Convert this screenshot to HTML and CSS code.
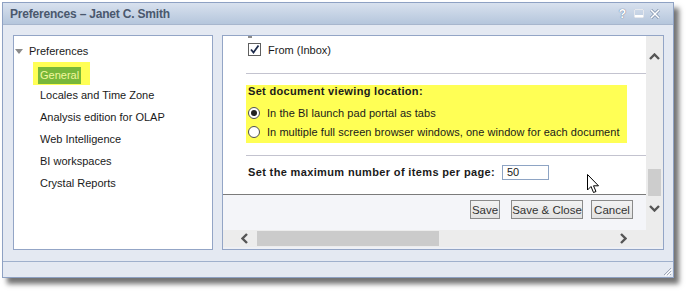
FILE: index.html
```html
<!DOCTYPE html>
<html>
<head>
<meta charset="utf-8">
<link rel="stylesheet" href="styles.css">
</head>
<body>
<div class="window">
  <div class="titlebar">
    <span class="title">Preferences – Janet C. Smith</span>
    <div class="tb-icons">
      <span class="q">?</span>
      <svg width="10" height="9" viewBox="0 0 10 9"><rect x="0.5" y="0.5" width="9" height="8" fill="none" stroke="#fff" stroke-width="1"/><rect x="0.5" y="6" width="9" height="2.5" fill="#fff"/><rect x="0" y="0" width="10" height="9" fill="none" stroke="#7d8ea8" stroke-width="0.4"/></svg>
      <svg width="10" height="10" viewBox="0 0 10 10"><path d="M1 1 L9 9 M9 1 L1 9" stroke="#7d8ea8" stroke-width="3"/><path d="M1 1 L9 9 M9 1 L1 9" stroke="#fff" stroke-width="1.6"/></svg>
    </div>
  </div>
  <div class="body">
    <div class="tree">
      <div class="node root"><span class="tri"></span>Preferences</div>
      <div class="node child selrow"><span class="sel-outer"><span class="sel-inner">General</span></span></div>
      <div class="node child">Locales and Time Zone</div>
      <div class="node child">Analysis edition for OLAP</div>
      <div class="node child">Web Intelligence</div>
      <div class="node child">BI workspaces</div>
      <div class="node child">Crystal Reports</div>
    </div>
    <div class="panel">
      <div class="panel-main">
        <div class="scroll-content">
          <div class="doc">
            <div class="frag"></div>
            <div class="check-row">
              <span class="checkbox"><svg width="11" height="11" viewBox="0 0 11 11"><path d="M2 5.5 L4.5 8.5 L9.5 1.5" fill="none" stroke="#1c2a4a" stroke-width="1.8"/></svg></span>
              <span>From (Inbox)</span>
            </div>
            <div class="sep"></div>
            <div class="yellow">
              <div class="heading">Set document viewing location:</div>
              <div class="radio-row"><span class="radio on"><span class="dot"></span></span><span>In the BI launch pad portal as tabs</span></div>
              <div class="radio-row"><span class="radio"></span><span>In multiple full screen browser windows, one window for each document</span></div>
            </div>
            <div class="sep sep2"></div>
            <div class="items-row">
              <span class="bold">Set the maximum number of items per page:</span>
              <span class="input">50</span>
            </div>
          </div>
          <div class="toolbar">
            <button class="btn b-save">Save</button>
            <button class="btn b-close">Save &amp; Close</button>
            <button class="btn b-cancel">Cancel</button>
          </div>
        </div>
        <div class="vscroll">
          <svg class="chev up" width="11" height="7" viewBox="0 0 11 7"><path d="M1 6 L5.5 1.5 L10 6" fill="none" stroke="#555" stroke-width="2.4"/></svg>
          <div class="vthumb"></div>
          <svg class="chev down" width="11" height="7" viewBox="0 0 11 7"><path d="M1 1 L5.5 5.5 L10 1" fill="none" stroke="#555" stroke-width="2.4"/></svg>
        </div>
      </div>
      <div class="hscroll">
        <svg class="hchev left" width="7" height="11" viewBox="0 0 7 11"><path d="M6 1 L1.5 5.5 L6 10" fill="none" stroke="#555" stroke-width="2.4"/></svg>
        <div class="hthumb"></div>
        <svg class="hchev right" width="7" height="11" viewBox="0 0 7 11"><path d="M1 1 L5.5 5.5 L1 10" fill="none" stroke="#555" stroke-width="2.4"/></svg>
      </div>
    </div>
  </div>
  <div class="statusbar">
    <svg class="grip" width="10" height="10" viewBox="0 0 10 10"><path d="M9 2 L2 9 M9 5 L5 9 M9 8 L8 9" stroke="#a0a8b8" stroke-width="1"/><path d="M10 3 L3 10 M10 6 L6 10" stroke="#fff" stroke-width="1"/></svg>
  </div>
</div>
<svg class="cursor" width="13" height="21" viewBox="0 0 13 21"><path d="M0.5 0.5 L0.5 16 L4 12.5 L6.5 18.5 L9 17.5 L6.5 11.8 L11.5 11.8 Z" fill="#fff" stroke="#000" stroke-width="1" stroke-linejoin="round"/></svg>
</body>
</html>
```

FILE: styles.css
```css
* { box-sizing: border-box; }
html, body { margin: 0; padding: 0; background: #fff; }
body {
  font-family: "Liberation Sans", Arial, sans-serif;
  font-size: 11px;
  color: #1a1a1a;
  width: 689px;
  height: 293px;
  position: relative;
  overflow: hidden;
}
.window {
  margin: 2px 0 0 2px;
  width: 672px;
  height: 276px;
  border: 1px solid #8ea1c3;
  background: #e4e9f2;
  box-shadow: 5px 6px 5px rgba(0,0,0,0.55);
  display: flex;
  flex-direction: column;
}
.titlebar {
  height: 22px;
  flex: none;
  background: linear-gradient(#d8e1ee, #b5c6dc);
  border-bottom: 1px solid #a7b6cd;
  display: flex;
  align-items: center;
  justify-content: space-between;
  padding: 0 13px 0 7px;
}
.title {
  font-family: "Liberation Sans", sans-serif;
  font-weight: bold;
  font-size: 12px;
  color: #4a586d;
  letter-spacing: -0.2px;
}
.tb-icons { display: flex; align-items: center; gap: 6px; }
.q {
  color: #fff;
  font-weight: bold;
  font-size: 12px;
  text-shadow: 0 0 1px #6e7f9a, 0 0 1px #6e7f9a;
  margin-right: 2px;
}
.body {
  flex: 1;
  display: flex;
  gap: 9px;
  padding: 10px 9px 11px 10px;
  border-bottom: 1px solid #9fb0cc;
}
.tree {
  width: 200px;
  height: 215px;
  background: #fff;
  border: 1px solid #93a5c6;
  padding-top: 4px;
}
.node {
  height: 22px;
  line-height: 22px;
  white-space: nowrap;
}
.root { padding-left: 1px; display: flex; align-items: center; }
.tri {
  width: 0; height: 0;
  border-left: 4px solid transparent;
  border-right: 4px solid transparent;
  border-top: 5px solid #8a8a8a;
  margin-right: 6px;
}
.child { padding-left: 26px; }
.selrow { padding-left: 19px; display: flex; align-items: flex-start; }
.sel-outer {
  display: inline-block;
  background: #ffff55;
  height: 23px;
  padding: 2px 9px 4px 5px;
}
.sel-inner {
  display: inline-block;
  background: #78b83a;
  color: #f2f79c;
  height: 17px;
  line-height: 17px;
  padding: 0 2px;
}
.panel {
  width: 442px;
  height: 215px;
  border: 1px solid #93a5c6;
  background: #eef0f5;
  display: flex;
  flex-direction: column;
}
.panel-main { height: 194px; display: flex; }
.scroll-content { width: 423px; display: flex; flex-direction: column; }
.doc {
  height: 159px;
  background: #fff;
  border-bottom: 1px solid #7b7b7b;
  padding-left: 23px;
  display: flex;
  flex-direction: column;
}
.frag { width: 4px; height: 2px; background: #8c8c8c; margin-left: 2px; }
.check-row {
  margin-top: 5px;
  height: 13px;
  display: flex;
  align-items: center;
  gap: 7px;
  padding-left: 2px;
}
.checkbox {
  width: 13px; height: 13px;
  border: 1px solid #5f5f5f;
  background: #fff;
  display: flex; align-items: center; justify-content: center;
}
.sep { height: 1px; background: #c3c3cf; margin-top: 17px; }
.sep2 { margin-top: 12px; }
.yellow {
  margin-top: 11px;
  width: 381px;
  height: 58px;
  background: #ffff55;
  padding-left: 2px;
}
.heading {
  font-weight: bold;
  height: 13px;
  line-height: 13px;
  margin-bottom: 5px;
  letter-spacing: 0.33px;
}
.radio-row { height: 19px; display: flex; align-items: center; gap: 7px; letter-spacing: 0.05px; }
.radio {
  width: 12px; height: 12px;
  border-radius: 50%;
  border: 1px solid #4f4f4f;
  background: #fff;
  display: flex; align-items: center; justify-content: center;
}
.dot { width: 6px; height: 6px; border-radius: 50%; background: #222; }
.items-row {
  margin-top: 9px;
  height: 14px;
  display: flex;
  align-items: center;
  padding-left: 2px;
}
.bold { font-weight: bold; width: 254px; letter-spacing: 0.36px; white-space: nowrap; }
.input {
  width: 47px; height: 15px;
  border: 1px solid #8ea4c4;
  background: #fff;
  padding-left: 4px;
  line-height: 13px;
  font-size: 11px;
}
.toolbar {
  height: 35px;
  background: #f4f5f9;
  display: flex;
  justify-content: flex-end;
  align-items: flex-start;
  padding: 5px 13px 0 0;
}
.btn {
  height: 19px;
  font-family: "Liberation Sans", Arial, sans-serif;
  font-size: 11.5px;
  color: #333;
  background: linear-gradient(#f2f2f2, #e2e2e2);
  border: 1px solid #8a8a8a;
  border-radius: 0;
  padding: 0;
  margin: 0;
  text-align: center;
}
.b-save { width: 30px; }
.b-close { width: 72px; margin-left: 11px; }
.b-cancel { width: 42px; margin-left: 8px; }
.vscroll {
  width: 17px;
  background: #ececec;
  display: flex;
  flex-direction: column;
  align-items: center;
  padding-top: 17px;
}
.vthumb { width: 13px; height: 27px; background: #cdcdcd; margin-top: 109px; }
.chev.down { margin-top: 9px; }
.hscroll {
  height: 17px;
  background: #ececec;
  display: flex;
  align-items: center;
  padding-left: 18px;
}
.hthumb { width: 182px; height: 15px; background: #cbcbcb; margin-left: 9px; }
.hchev.right { margin-left: 181px; }
.statusbar {
  flex: 1;
  display: flex;
  justify-content: flex-end;
  align-items: flex-end;
  padding: 0 1px 1px 0;
}
.cursor { position: absolute; left: 587px; top: 174px; }
```
